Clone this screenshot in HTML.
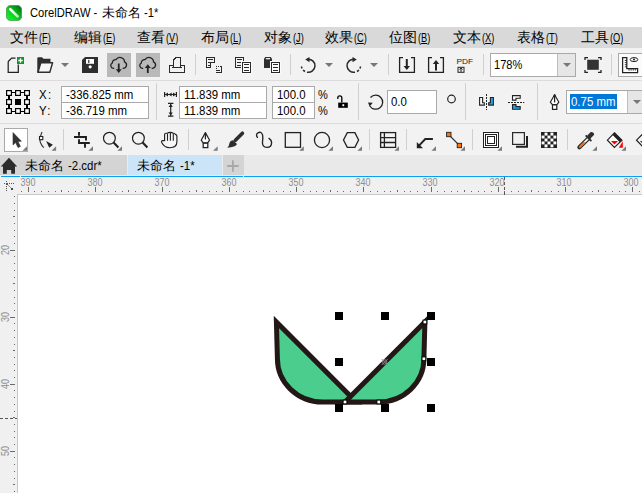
<!DOCTYPE html>
<html><head><meta charset="utf-8">
<style>
*{margin:0;padding:0;box-sizing:border-box}
html,body{width:642px;height:493px;overflow:hidden;background:#fff;font-family:"Liberation Sans",sans-serif;color:#000}
svg.ov{position:absolute;left:0;top:0}
.t{position:absolute;white-space:nowrap;font-size:13px;line-height:16px;color:#000;transform-origin:0 0}
.menu{position:absolute;top:28px;font-size:14px;line-height:18px;white-space:nowrap}
.menu span{display:inline-block;font-size:12.5px;transform:scaleX(0.74);transform-origin:0 0;margin-left:0.5px}
.rl{position:absolute;font-size:10px;line-height:10px;color:#8e8e8e;white-space:nowrap;transform-origin:0 0}
</style></head><body>
<svg class="ov" width="642" height="493" viewBox="0 0 642 493" shape-rendering="crispEdges">
<!-- bands -->
<rect x="0" y="0" width="642" height="27" fill="#fff"/>
<rect x="0" y="27" width="642" height="22" fill="#d9d9d9"/>
<rect x="0" y="48" width="642" height="107" fill="#f2f2f2"/>
<rect x="0" y="80" width="642" height="1" fill="#dcdcdc"/>
<rect x="0" y="123" width="642" height="1" fill="#dcdcdc"/>
<!-- tabs -->
<rect x="0" y="155" width="642" height="21" fill="#e9e9e9"/>
<rect x="0" y="155" width="128" height="21" fill="#d4d4d4"/>

<rect x="128" y="155" width="95" height="21" fill="#cce4f7"/>
<rect x="223" y="155" width="21" height="21" fill="#d4d4d4"/>
<rect x="0" y="175" width="642" height="1" fill="#ebebeb"/><rect x="127" y="155" width="1" height="20" fill="#ececec"/><rect x="222" y="155" width="1" height="20" fill="#ececec"/><rect x="1" y="176" width="641" height="1" fill="#0a9ff0"/><rect x="20" y="175" width="1" height="2" fill="#f0f0f0"/><rect x="243" y="175" width="1" height="2" fill="#f0f0f0"/><rect x="0" y="177" width="642" height="1" fill="#f7f7f7"/>
<!-- rulers -->
<rect x="0" y="177" width="642" height="18" fill="#f0f0f0"/>
<rect x="0" y="177" width="17" height="316" fill="#f0f0f0"/>
<rect x="17" y="194" width="625" height="1" fill="#c8c8c8"/>
<rect x="17" y="194" width="1" height="299" fill="#c8c8c8"/>
<rect x="18" y="195" width="624" height="298" fill="#fff"/>
<!-- toolbar1 separators -->
<g fill="#d0d0d0">
<rect x="195" y="54" width="1" height="21"/>
<rect x="290" y="54" width="1" height="21"/>
<rect x="388" y="54" width="1" height="21"/>
<rect x="483" y="54" width="1" height="21"/>
<rect x="611" y="54" width="1" height="21"/>
<!-- toolbar2 -->
<rect x="156" y="83" width="1" height="37"/>
<rect x="358" y="83" width="1" height="37"/>
<rect x="465" y="83" width="1" height="37"/>
<rect x="537" y="83" width="1" height="37"/>
<!-- toolbar3 -->
<rect x="63" y="129" width="1" height="21"/>
<rect x="188" y="129" width="1" height="21"/>
<rect x="369" y="129" width="1" height="21"/>
<rect x="406" y="129" width="1" height="21"/>
<rect x="472" y="129" width="1" height="21"/>
<rect x="567" y="129" width="1" height="21"/>
</g>
<!-- toolbar1 buttons -->
<rect x="107" y="53" width="24" height="24" fill="#b9b9b9"/>
<rect x="136" y="53" width="24" height="24" fill="#b9b9b9"/>
<!-- zoom combo -->
<rect x="490.5" y="53.5" width="85" height="23" fill="#fff" stroke="#a9a9a9"/>
<rect x="557" y="54" width="18" height="22" fill="#e6e6e6"/>
<rect x="557" y="54" width="1" height="22" fill="#bdbdbd"/>
<rect x="618.5" y="53.5" width="30" height="23" fill="#fbfbfb" stroke="#a9a9a9"/>
<!-- toolbar2 boxes -->
<g fill="#fff" stroke="#a9a9a9">
<rect x="61.5" y="86.5" width="87" height="32"/>
<rect x="179.5" y="86.5" width="87" height="32"/>
<rect x="272.5" y="86.5" width="42" height="32"/>
<rect x="387.5" y="90.5" width="49" height="23"/>
<rect x="566.5" y="90.5" width="80" height="23"/>
</g>
<g fill="#a9a9a9">
<rect x="62" y="102" width="86" height="1"/>
<rect x="180" y="102" width="86" height="1"/>
<rect x="273" y="102" width="41" height="1"/>
</g>
<rect x="627" y="91" width="15" height="22" fill="#e6e6e6"/>
<rect x="627" y="91" width="1" height="22" fill="#bdbdbd"/>
<rect x="570" y="94" width="47" height="15" fill="#0078d7"/>
<!-- select tool button -->
<rect x="4.5" y="128.5" width="23" height="23" fill="#fff" stroke="#a9a9a9"/>
</svg>


<svg class="ov" width="642" height="493" viewBox="0 0 642 493">
<g fill="none" stroke="#222" stroke-width="1.25" stroke-linejoin="miter">
<!-- new doc -->
<path d="M8.2,61.5 L11.7,58 L15.5,58 M8.2,61.5 L8.2,72.3 L18.3,72.3 L18.3,64.5"/>
</g>
<rect x="17" y="57" width="7" height="7" fill="#0a9a2a"/>
<path d="M20.5,58.3 V62.7 M18.3,60.5 H22.7" stroke="#fff" stroke-width="1.3"/>
<!-- open folder -->
<path d="M37.3,72.8 L37.3,58.2 Q37.3,57.3 38.3,57.3 L42,57.3 L43.5,58.8 L50.5,58.8 L50.5,62.5 L41,62.5 L38.5,72.8 Z" fill="#2e2e2e"/>
<path d="M40.8,62.8 L52.6,62.8 L49.8,72.3 L38,72.3 Z" fill="#f6f6f6" stroke="#2e2e2e" stroke-width="1.4" stroke-linejoin="round"/>
<path d="M61,63 H69 L65,67 Z" fill="#777"/>
<!-- save -->
<path d="M82,60 L85,57 L98,57 L98,73 L82,73 Z" fill="#2e2e2e"/>
<rect x="86" y="59" width="8" height="4.8" fill="#fff"/>
<rect x="88.2" y="59.8" width="1.2" height="3.2" fill="#2e2e2e"/>
<circle cx="90.2" cy="66.8" r="1.6" fill="#fff"/>
<!-- cloud down -->
<g fill="none" stroke="#222" stroke-width="1.3">
<path d="M114.2,68.3 L113.5,68.3 A2.8,2.8 0 0 1 112.3,63 A3.2,3.2 0 0 1 116,59.6 A4.6,4.6 0 0 1 124.5,61.8 A3.4,3.4 0 0 1 123.5,68.3 L122.6,68.3"/>
<path d="M143.2,68.3 L142.5,68.3 A2.8,2.8 0 0 1 141.3,63 A3.2,3.2 0 0 1 145,59.6 A4.6,4.6 0 0 1 153.5,61.8 A3.4,3.4 0 0 1 152.5,68.3 L151.6,68.3"/>
</g>
<path d="M118.75,63.5 V70" stroke="#222" stroke-width="1.8"/>
<path d="M115.8,69.2 H121.7 L118.75,73 Z" fill="#222"/>
<path d="M147.8,68 V73" stroke="#222" stroke-width="1.8"/>
<path d="M144.8,68 H150.8 L147.8,64.2 Z" fill="#222"/>
<!-- print -->
<g shape-rendering="crispEdges">
<rect x="173" y="59" width="1" height="9" fill="#2a2a2a"/>
<rect x="180" y="57" width="1" height="11" fill="#2a2a2a"/>
<rect x="175" y="57" width="6" height="1" fill="#2a2a2a"/>
<rect x="174" y="58" width="1" height="2" fill="#2a2a2a"/>
<rect x="175" y="58" width="1" height="1" fill="#2a2a2a"/>
<rect x="169" y="65" width="5" height="1" fill="#2a2a2a"/>
<rect x="180" y="65" width="5" height="1" fill="#2a2a2a"/>
<rect x="169" y="65" width="1" height="8" fill="#2a2a2a"/>
<rect x="184" y="65" width="1" height="8" fill="#2a2a2a"/>
<rect x="169" y="72" width="16" height="1" fill="#2a2a2a"/>
<rect x="172" y="67" width="10" height="1" fill="#2a2a2a"/>
</g>
<!-- cut/clip -->
<g shape-rendering="crispEdges">
<rect x="206" y="57" width="9" height="1" fill="#2a2a2a"/>
<rect x="206" y="57" width="1" height="11" fill="#2a2a2a"/>
<rect x="214" y="57" width="1" height="6" fill="#2a2a2a"/>
<rect x="210" y="62" width="5" height="1" fill="#2a2a2a"/>
<rect x="210" y="62" width="1" height="6" fill="#2a2a2a"/>
<rect x="206" y="67" width="5" height="1" fill="#2a2a2a"/>
<rect x="208" y="59" width="5" height="1" fill="#2a2a2a"/>
<rect x="208" y="62" width="2" height="1" fill="#2a2a2a"/>
<rect x="208" y="65" width="2" height="1" fill="#2a2a2a"/>
<rect x="216" y="66" width="1" height="1" fill="#2a2a2a"/>
<rect x="218" y="66" width="1" height="1" fill="#2a2a2a"/>
<rect x="216" y="68" width="1" height="1" fill="#2a2a2a"/>
<rect x="216" y="70" width="4" height="1" fill="#2a2a2a"/>
<rect x="216" y="72" width="6" height="1" fill="#2a2a2a"/>
<rect x="221" y="66" width="1" height="7" fill="#2a2a2a"/>
<rect x="220" y="66" width="1" height="1" fill="#2a2a2a"/>
<rect x="235" y="57" width="9" height="1" fill="#2a2a2a"/>
<rect x="235" y="57" width="1" height="11" fill="#2a2a2a"/>
<rect x="243" y="57" width="1" height="5" fill="#2a2a2a"/>
<rect x="235" y="67" width="7" height="1" fill="#2a2a2a"/>
<rect x="237" y="59" width="5" height="1" fill="#2a2a2a"/>
<rect x="237" y="62" width="5" height="1" fill="#2a2a2a"/>
<rect x="237" y="65" width="5" height="1" fill="#2a2a2a"/>
<rect x="241" y="61" width="11" height="13" fill="#fbfbfb"/>
<rect x="242" y="62" width="9" height="1" fill="#2a2a2a"/>
<rect x="242" y="72" width="9" height="1" fill="#2a2a2a"/>
<rect x="242" y="62" width="1" height="11" fill="#2a2a2a"/>
<rect x="250" y="62" width="1" height="11" fill="#2a2a2a"/>
<rect x="244" y="64" width="5" height="1" fill="#2a2a2a"/>
<rect x="244" y="67" width="5" height="1" fill="#2a2a2a"/>
<rect x="244" y="70" width="5" height="1" fill="#2a2a2a"/>
</g>
<path d="M264,59 L265.2,57 H270.8 L272,59 V68 H264 Z" fill="#2e2e2e"/>
<rect x="265.9" y="58.1" width="4.2" height="1.2" fill="#fff"/>
<g shape-rendering="crispEdges">
<rect x="270" y="61" width="11" height="13" fill="#fbfbfb"/>
<rect x="271" y="62" width="9" height="1" fill="#2a2a2a"/>
<rect x="271" y="72" width="9" height="1" fill="#2a2a2a"/>
<rect x="271" y="62" width="1" height="11" fill="#2a2a2a"/>
<rect x="279" y="62" width="1" height="11" fill="#2a2a2a"/>
<rect x="273" y="64" width="5" height="1" fill="#2a2a2a"/>
<rect x="273" y="67" width="5" height="1" fill="#2a2a2a"/>
<rect x="273" y="70" width="5" height="1" fill="#2a2a2a"/>
</g>
<!-- undo / redo -->
<g fill="none" stroke="#2a2a2a" stroke-width="1.5">
<path d="M307.5,59.2 A6.6,6.6 0 1 1 307,72.2" />
<path d="M305,71.5 L303,70.2 M302,68.5 L301.4,66.6" />
<path d="M354.5,59.2 A6.6,6.6 0 1 0 355,72.2" />
<path d="M357,71.5 L359,70.2 M360,68.5 L360.6,66.6" />
</g>
<path d="M309.5,57 L309.5,62.2 L305.2,59.6 Z" fill="#2a2a2a"/>
<path d="M352.5,57 L352.5,62.2 L356.8,59.6 Z" fill="#2a2a2a"/>
<path d="M325,63 H333 L329,67 Z" fill="#777"/>
<path d="M370,63 H378 L374,67 Z" fill="#777"/>
<!-- import/export -->
<g fill="none" stroke="#222" stroke-width="1.3">
<path d="M403,57.6 H399.6 V72.3 H414.4 V57.6 H411"/>
<path d="M432,57.6 H428.6 V72.3 H443.4 V57.6 H440"/>
</g>
<path d="M406.8,59 V67" stroke="#222" stroke-width="2"/>
<path d="M403.6,66 H410 L406.8,70 Z" fill="#222"/>
<path d="M436,63 V70.5" stroke="#222" stroke-width="2"/>
<path d="M432.8,64 H439.2 L436,60 Z" fill="#222"/>
<!-- PDF -->
<text x="456.6" y="63.9" font-family="Liberation Sans" font-size="7.6" fill="#222" textLength="16.5" lengthAdjust="spacingAndGlyphs">PDF</text>
<g fill="none" stroke="#222" stroke-width="1"><rect x="458" y="67.3" width="6" height="5"/><path d="M459.5,69.5 L461,68 L462.5,69.5 M461,68 V72"/></g>
<!-- zoom combo arrow -->
<path d="M563,63 H571 L567,67 Z" fill="#777"/>
<!-- zoom fit -->
<g fill="none" stroke="#222" stroke-width="1.3">
<path d="M585,60 V57.6 H588 M598,57.6 H601 V60 M585,70 V72.4 H588 M598,72.4 H601 V70"/>
</g>
<rect x="587.2" y="59.7" width="11.6" height="10.1" fill="#333"/>
<!-- ruler button -->
<path d="M622.6,57.6 H626.8 V68.6 H637.6 V72.6 H622.6 Z" fill="#fff" stroke="#222" stroke-width="1.25"/>
<g stroke="#222" stroke-width="0.9"><path d="M626.8,60.5 H624.8 M626.8,62.6 H624.8 M626.8,64.7 H624.8 M626.8,66.8 H624.8 M629,68.6 V70.6 M631.1,68.6 V70.6 M633.2,68.6 V70.6 M635.3,68.6 V70.6"/></g>
<ellipse cx="634" cy="59.6" rx="3.8" ry="2" fill="none" stroke="#222" stroke-width="1"/>
<circle cx="634" cy="59.6" r="1" fill="#222"/>

<!-- ref point icon -->
<g fill="#000" shape-rendering="crispEdges">
<rect x="12" y="92" width="3" height="1.2"/><rect x="21" y="92" width="3" height="1.2"/>
<rect x="12" y="110.8" width="3" height="1.2"/><rect x="21" y="110.8" width="3" height="1.2"/>
<rect x="8.4" y="96" width="1.2" height="3"/><rect x="8.4" y="105" width="1.2" height="3"/>
<rect x="26.4" y="96" width="1.2" height="3"/><rect x="26.4" y="105" width="1.2" height="3"/>
</g>
<rect x="6" y="90" width="6" height="6" fill="#000"/><rect x="7.2" y="91.2" width="3.6" height="3.6" fill="#fff"/><rect x="6" y="99" width="6" height="6" fill="#000"/><rect x="7.2" y="100.2" width="3.6" height="3.6" fill="#fff"/><rect x="6" y="108" width="6" height="6" fill="#000"/><rect x="7.2" y="109.2" width="3.6" height="3.6" fill="#fff"/><rect x="15" y="90" width="6" height="6" fill="#000"/><rect x="16.2" y="91.2" width="3.6" height="3.6" fill="#fff"/><rect x="15" y="108" width="6" height="6" fill="#000"/><rect x="16.2" y="109.2" width="3.6" height="3.6" fill="#fff"/><rect x="24" y="90" width="6" height="6" fill="#000"/><rect x="25.2" y="91.2" width="3.6" height="3.6" fill="#fff"/><rect x="24" y="99" width="6" height="6" fill="#000"/><rect x="25.2" y="100.2" width="3.6" height="3.6" fill="#fff"/><rect x="24" y="108" width="6" height="6" fill="#000"/><rect x="25.2" y="109.2" width="3.6" height="3.6" fill="#fff"/>
<rect x="15" y="99" width="6" height="6" fill="#000"/>
<!-- width/height icons -->
<g stroke="#222" stroke-width="1.2" fill="none">
<path d="M164.6,92 V97 M176.4,92 V97 M165,94.5 H176"/>
<path d="M168,103.4 H173.4 M168,116.2 H173.4 M170.7,104 V115.6"/>
</g>
<g fill="#222">
<path d="M165,94.5 L168,92.6 V96.4 Z M176,94.5 L173,92.6 V96.4 Z M168.6,94.5 L171.6,92.6 V96.4Z"/>
<path d="M170.7,104 L168.6,107 H172.8 Z M170.7,115.6 L168.6,112.6 H172.8 Z"/>
</g>
<!-- lock -->
<path d="M337.8,99 V97.8 A2,2 0 0 1 341.8,97.8 V102.6" fill="none" stroke="#000" stroke-width="1.3"/>
<rect x="338.2" y="102.6" width="9.6" height="5.2" fill="#000"/>
<rect x="342.4" y="104.2" width="1.8" height="2" fill="#fff"/>
<!-- rotate -->
<path d="M370.5,97.5 A7,7 0 1 1 369.8,106" fill="none" stroke="#222" stroke-width="1.3"/>
<path d="M368,102.6 L372.8,102.8 L369.6,106.6 Z" fill="#222"/>
<circle cx="451.5" cy="99" r="3.8" fill="none" stroke="#222" stroke-width="1.2"/>
<!-- mirror h -->
<path d="M479.6,97.5 H482.6 V102.7 H484.3 V105.1 H479.6 Z" fill="#fff" stroke="#222" stroke-width="1.1"/>
<path d="M493.4,97.5 H490.4 V102.7 H488.7 V105.1 H493.4 Z" fill="#1aa8ef" stroke="#222" stroke-width="1.1"/>
<path d="M486.5,94 V110" stroke="#222" stroke-width="1" stroke-dasharray="2,1"/>
<!-- mirror v -->
<path d="M512.5,95.6 H520.2 V98.2 H516 V100.1 H512.5 Z" fill="#fff" stroke="#222" stroke-width="1.1"/>
<path d="M512.5,109.2 H520.2 V106.6 H516 V104.6 H512.5 Z" fill="#1aa8ef" stroke="#222" stroke-width="1.1"/>
<path d="M508,102.5 H524.3" stroke="#222" stroke-width="1" stroke-dasharray="2,1"/>
<!-- pen (property bar) -->
<path d="M554.6,94.8 L558.9,102.2 L556.8,104.6 H552.4 L550.3,102.2 Z" fill="#fff" stroke="#222" stroke-width="1.15" stroke-linejoin="round"/>
<path d="M554.6,95.2 V102.4" stroke="#222" stroke-width="1.3"/>
<circle cx="554.6" cy="95.2" r="1" fill="#222"/>
<rect x="552.5" y="104.9" width="4.3" height="4.5" fill="#fff" stroke="#222" stroke-width="1.2"/>
<path d="M633,100 H641 L637,104 Z" fill="#777"/>
</svg>


<svg class="ov" width="642" height="493" viewBox="0 0 642 493">
<!-- corner triangles -->
<g fill="#7a7a7a">
<path d="M27,146.2 V150.8 H22.4 Z"/>
<path d="M56.1,146.2 V150.8 H51.5 Z"/>
<path d="M93,146.2 V150.8 H88.4 Z"/>
<path d="M122,146.2 V150.8 H117.4 Z"/>
<path d="M217.7,146.2 V150.8 H213.1 Z"/>
<path d="M303.8,146.2 V150.8 H299.2 Z"/>
<path d="M333,146.2 V150.8 H328.4 Z"/>
<path d="M362,146.2 V150.8 H357.4 Z"/>
<path d="M399,146.2 V150.8 H394.4 Z"/>
<path d="M436,146.2 V150.8 H431.4 Z"/>
<path d="M465,146.2 V150.8 H460.4 Z"/>
<path d="M502,146.2 V150.8 H497.4 Z"/>
<path d="M597,146.2 V150.8 H592.4 Z"/>
<path d="M626,146.2 V150.8 H621.4 Z"/>
</g>
<!-- select arrow -->
<path d="M13,132.6 L13,145 L15.6,142.6 L18,147.6 L20.4,146.4 L18,141.6 L21.4,141.2 Z" fill="#333" stroke="#333" stroke-width="0.6" stroke-linejoin="round"/>
<!-- shape tool -->
<path d="M42,132 Q39,139 40.5,142.8 Q41.6,145.6 43.8,147.6" fill="none" stroke="#333" stroke-width="1.1"/>
<rect x="39.5" y="136.5" width="3.3" height="3.2" fill="#fff" stroke="#222" stroke-width="1.1"/>
<path d="M46.1,140.9 L52.9,144.8 L49.3,147.8 Z" fill="#222"/>
<!-- crop -->
<path d="M79,132 V135.8 M74,137 H86 V140.4 M79,139.2 V143 H89.8 M85,143 V147.8" fill="none" stroke="#1e1e1e" stroke-width="1.9"/>
<!-- zoom -->
<g fill="none" stroke="#222" stroke-width="1.2">
<circle cx="109.4" cy="138.2" r="5.9"/>
<circle cx="138.4" cy="138.2" r="5.9"/>
</g>
<g stroke="#222" stroke-width="2.1" stroke-linecap="butt"><path d="M113.6,142.4 L118.4,147.4 M142.6,142.4 L147.4,147.4"/></g>
<!-- hand -->
<path d="M164.6,140.6 V134.6 Q164.6,133.2 166,133.2 H167.4 Q168,132.3 170.2,132.3 Q172.4,132.3 173,133.2 H173.8 Q175,133.2 175.3,134.4 Q176.9,134.8 176.9,136.3 V141.8 Q176.9,147.7 169.8,147.7 Q164.2,147.7 161.6,142.2 Q161.3,140.6 162.6,140.6 Z" fill="#f7f7f7" stroke="#222" stroke-width="1.15" stroke-linejoin="round"/>
<path d="M167.5,133.6 V140.7 M170.4,133 V140.7 M173.3,133.6 V140.7" stroke="#222" stroke-width="1.1"/>
<!-- pen tool -->
<path d="M205.4,132.6 L209.6,140.2 L207.6,142.8 H203.2 L201.2,140.2 Z" fill="#fff" stroke="#222" stroke-width="1.2" stroke-linejoin="round"/>
<path d="M205.4,133.4 V139.4" stroke="#222" stroke-width="1.3"/>
<rect x="203.2" y="143.2" width="4.6" height="4.4" fill="#fff" stroke="#222" stroke-width="1.25"/>
<!-- brush -->
<path d="M242.4,133.2 L235.4,140.2" stroke="#2e2e2e" stroke-width="3.6" stroke-linecap="round"/>
<path d="M233.2,140.2 L237,144 Q235.8,147.4 227.2,147.7 Q229.2,145.6 229.4,143.4 Q230,140.4 233.2,140.2 Z" fill="#2e2e2e"/>
<!-- curve -->
<path d="M257.4,137.4 Q255.4,134.4 258,132.8 Q261.6,131 262.6,135.2 Q263.2,138.2 262.5,141.6 Q261.9,147.4 267,147.4 Q271.6,147.4 271.6,142.4 Q271.4,140 269,138.4" fill="none" stroke="#222" stroke-width="1.35" stroke-linecap="round"/>
<!-- rect / ellipse / polygon -->
<g fill="none" stroke="#222" stroke-width="1.3">
<rect x="285.3" y="132.6" width="15.2" height="14.7"/>
<circle cx="322" cy="140" r="7.6"/>
<path d="M347.3,132.7 H354.9 L358.6,140 L354.9,147.3 H347.3 L343.5,140 Z"/>
</g>
<!-- table -->
<g fill="none" stroke="#222" stroke-width="1.3">
<rect x="380.6" y="132.6" width="15" height="14.8"/>
<path d="M380.6,137.6 H395.6 M380.6,142.5 H395.6 M384.4,132.6 V147.4"/>
</g>
<!-- connector -->
<path d="M432.9,139 H425.3 L419,145.6" fill="none" stroke="#222" stroke-width="2"/>
<path d="M416.8,142 V148.2 H423 Z" fill="#222"/>
<!-- dimension/ connector nodes -->
<path d="M448.5,134.5 L459.5,145.5" stroke="#333" stroke-width="1.1"/>
<rect x="446.6" y="132.3" width="4.4" height="4.4" fill="#f7740c" stroke="#222" stroke-width="0.9"/>
<rect x="457.2" y="143.3" width="4.4" height="4.4" fill="#f7740c" stroke="#222" stroke-width="0.9"/>
<!-- contour -->
<g fill="none" stroke="#222" stroke-width="1" shape-rendering="crispEdges">
<rect x="483.5" y="132.5" width="15" height="15" fill="#fff"/>
<rect x="485.5" y="134.5" width="11" height="11"/>
<rect x="487.5" y="136.5" width="7" height="7"/>
</g>
<!-- shadow -->
<path d="M527,136 V146.8 H516" fill="none" stroke="#222" stroke-width="2"/>
<rect x="512.6" y="132.6" width="11.8" height="11.8" fill="none" stroke="#2a2a2a" stroke-width="1.2"/>
<!-- transparency checker -->
<rect x="541" y="132" width="16" height="16" fill="#222"/>
<g fill="#fff"><rect x="544.55" y="132.60" width="2.95" height="2.95"/><rect x="550.45" y="132.60" width="2.95" height="2.95"/><rect x="541.60" y="135.55" width="2.95" height="2.95"/><rect x="547.50" y="135.55" width="2.95" height="2.95"/><rect x="553.40" y="135.55" width="2.95" height="2.95"/><rect x="544.55" y="138.50" width="2.95" height="2.95"/><rect x="550.45" y="138.50" width="2.95" height="2.95"/><rect x="541.60" y="141.45" width="2.95" height="2.95"/><rect x="547.50" y="141.45" width="2.95" height="2.95"/><rect x="553.40" y="141.45" width="2.95" height="2.95"/><rect x="544.55" y="144.40" width="2.95" height="2.95"/><rect x="550.45" y="144.40" width="2.95" height="2.95"/></g>
<!-- eyedropper -->
<path d="M588.6,138.2 L579.4,147.2" stroke="#2e2e2e" stroke-width="4.2" stroke-linecap="round"/>
<path d="M588.2,138.6 L580,146.8" stroke="#fff" stroke-width="1.6"/>
<path d="M584,142.8 L579.8,147" stroke="#f06a10" stroke-width="1.8" stroke-linecap="round"/>
<path d="M585.6,135.4 L591.4,141.2" stroke="#2e2e2e" stroke-width="1.8"/>
<path d="M587.2,135.6 L590.8,132 Q593.8,131.6 594.2,134.8 L590.4,138.6 Z" fill="#2e2e2e"/>
<!-- fill bucket -->
<path d="M614.4,132.8 L621.9,140.2 L614.4,147.4 L607.4,140.2 Z" fill="#fff" stroke="#222" stroke-width="1.2"/>
<path d="M613.6,134 L621.1,141.4" stroke="#222" stroke-width="3"/>
<path d="M610.9,141.1 H618.1 L614.5,144.4 Z" fill="#f00"/>
<path d="M622.8,141.2 V147.7 H618.8 Z" fill="#f00"/>
<!-- partial next -->
<path d="M643.5,133 L636.5,140.2 L643.5,147.4" fill="none" stroke="#222" stroke-width="1.2"/>
<path d="M639.8,141.1 H642 V143.2 Z" fill="#f00"/>

<!-- home -->
<path d="M9,157.8 L17.2,166.6 H15 V173.8 H11.2 V170 H6.8 V173.8 H3 V166.6 H0.8 Z" fill="#2b2b2b"/>
<!-- plus -->
<path d="M232.9,160.2 V171.8 M227.1,166 H238.7" stroke="#a8a8a8" stroke-width="1.8"/>
</svg>

<svg class="ov" width="642" height="493" viewBox="0 0 642 493">
<g shape-rendering="crispEdges"><rect x="21" y="191" width="1" height="1" fill="#6a6a6a"/><rect x="28" y="187" width="1" height="5" fill="#6a6a6a"/><rect x="34" y="191" width="1" height="1" fill="#6a6a6a"/><rect x="41" y="191" width="1" height="1" fill="#6a6a6a"/><rect x="48" y="191" width="1" height="1" fill="#6a6a6a"/><rect x="55" y="191" width="1" height="1" fill="#6a6a6a"/><rect x="61" y="190" width="1" height="2" fill="#6a6a6a"/><rect x="68" y="191" width="1" height="1" fill="#6a6a6a"/><rect x="75" y="191" width="1" height="1" fill="#6a6a6a"/><rect x="81" y="191" width="1" height="1" fill="#6a6a6a"/><rect x="88" y="191" width="1" height="1" fill="#6a6a6a"/><rect x="95" y="187" width="1" height="5" fill="#6a6a6a"/><rect x="102" y="191" width="1" height="1" fill="#6a6a6a"/><rect x="108" y="191" width="1" height="1" fill="#6a6a6a"/><rect x="115" y="191" width="1" height="1" fill="#6a6a6a"/><rect x="122" y="191" width="1" height="1" fill="#6a6a6a"/><rect x="128" y="190" width="1" height="2" fill="#6a6a6a"/><rect x="135" y="191" width="1" height="1" fill="#6a6a6a"/><rect x="142" y="191" width="1" height="1" fill="#6a6a6a"/><rect x="149" y="191" width="1" height="1" fill="#6a6a6a"/><rect x="155" y="191" width="1" height="1" fill="#6a6a6a"/><rect x="162" y="187" width="1" height="5" fill="#6a6a6a"/><rect x="169" y="191" width="1" height="1" fill="#6a6a6a"/><rect x="175" y="191" width="1" height="1" fill="#6a6a6a"/><rect x="182" y="191" width="1" height="1" fill="#6a6a6a"/><rect x="189" y="191" width="1" height="1" fill="#6a6a6a"/><rect x="196" y="190" width="1" height="2" fill="#6a6a6a"/><rect x="202" y="191" width="1" height="1" fill="#6a6a6a"/><rect x="209" y="191" width="1" height="1" fill="#6a6a6a"/><rect x="216" y="191" width="1" height="1" fill="#6a6a6a"/><rect x="222" y="191" width="1" height="1" fill="#6a6a6a"/><rect x="229" y="187" width="1" height="5" fill="#6a6a6a"/><rect x="236" y="191" width="1" height="1" fill="#6a6a6a"/><rect x="243" y="191" width="1" height="1" fill="#6a6a6a"/><rect x="249" y="191" width="1" height="1" fill="#6a6a6a"/><rect x="256" y="191" width="1" height="1" fill="#6a6a6a"/><rect x="263" y="190" width="1" height="2" fill="#6a6a6a"/><rect x="269" y="191" width="1" height="1" fill="#6a6a6a"/><rect x="276" y="191" width="1" height="1" fill="#6a6a6a"/><rect x="283" y="191" width="1" height="1" fill="#6a6a6a"/><rect x="290" y="191" width="1" height="1" fill="#6a6a6a"/><rect x="296" y="187" width="1" height="5" fill="#6a6a6a"/><rect x="303" y="191" width="1" height="1" fill="#6a6a6a"/><rect x="310" y="191" width="1" height="1" fill="#6a6a6a"/><rect x="316" y="191" width="1" height="1" fill="#6a6a6a"/><rect x="323" y="191" width="1" height="1" fill="#6a6a6a"/><rect x="330" y="190" width="1" height="2" fill="#6a6a6a"/><rect x="337" y="191" width="1" height="1" fill="#6a6a6a"/><rect x="343" y="191" width="1" height="1" fill="#6a6a6a"/><rect x="350" y="191" width="1" height="1" fill="#6a6a6a"/><rect x="357" y="191" width="1" height="1" fill="#6a6a6a"/><rect x="363" y="187" width="1" height="5" fill="#6a6a6a"/><rect x="370" y="191" width="1" height="1" fill="#6a6a6a"/><rect x="377" y="191" width="1" height="1" fill="#6a6a6a"/><rect x="384" y="191" width="1" height="1" fill="#6a6a6a"/><rect x="390" y="191" width="1" height="1" fill="#6a6a6a"/><rect x="397" y="190" width="1" height="2" fill="#6a6a6a"/><rect x="404" y="191" width="1" height="1" fill="#6a6a6a"/><rect x="410" y="191" width="1" height="1" fill="#6a6a6a"/><rect x="417" y="191" width="1" height="1" fill="#6a6a6a"/><rect x="424" y="191" width="1" height="1" fill="#6a6a6a"/><rect x="431" y="187" width="1" height="5" fill="#6a6a6a"/><rect x="437" y="191" width="1" height="1" fill="#6a6a6a"/><rect x="444" y="191" width="1" height="1" fill="#6a6a6a"/><rect x="451" y="191" width="1" height="1" fill="#6a6a6a"/><rect x="457" y="191" width="1" height="1" fill="#6a6a6a"/><rect x="464" y="190" width="1" height="2" fill="#6a6a6a"/><rect x="471" y="191" width="1" height="1" fill="#6a6a6a"/><rect x="478" y="191" width="1" height="1" fill="#6a6a6a"/><rect x="484" y="191" width="1" height="1" fill="#6a6a6a"/><rect x="491" y="191" width="1" height="1" fill="#6a6a6a"/><rect x="498" y="187" width="1" height="5" fill="#6a6a6a"/><rect x="504" y="191" width="1" height="1" fill="#6a6a6a"/><rect x="511" y="191" width="1" height="1" fill="#6a6a6a"/><rect x="518" y="191" width="1" height="1" fill="#6a6a6a"/><rect x="525" y="191" width="1" height="1" fill="#6a6a6a"/><rect x="531" y="190" width="1" height="2" fill="#6a6a6a"/><rect x="538" y="191" width="1" height="1" fill="#6a6a6a"/><rect x="545" y="191" width="1" height="1" fill="#6a6a6a"/><rect x="551" y="191" width="1" height="1" fill="#6a6a6a"/><rect x="558" y="191" width="1" height="1" fill="#6a6a6a"/><rect x="565" y="187" width="1" height="5" fill="#6a6a6a"/><rect x="572" y="191" width="1" height="1" fill="#6a6a6a"/><rect x="578" y="191" width="1" height="1" fill="#6a6a6a"/><rect x="585" y="191" width="1" height="1" fill="#6a6a6a"/><rect x="592" y="191" width="1" height="1" fill="#6a6a6a"/><rect x="598" y="190" width="1" height="2" fill="#6a6a6a"/><rect x="605" y="191" width="1" height="1" fill="#6a6a6a"/><rect x="612" y="191" width="1" height="1" fill="#6a6a6a"/><rect x="619" y="191" width="1" height="1" fill="#6a6a6a"/><rect x="625" y="191" width="1" height="1" fill="#6a6a6a"/><rect x="632" y="187" width="1" height="5" fill="#6a6a6a"/><rect x="639" y="191" width="1" height="1" fill="#6a6a6a"/><rect x="14" y="196" width="1" height="1" fill="#6a6a6a"/><rect x="14" y="203" width="1" height="1" fill="#6a6a6a"/><rect x="14" y="210" width="1" height="1" fill="#6a6a6a"/><rect x="13" y="216" width="2" height="1" fill="#6a6a6a"/><rect x="14" y="223" width="1" height="1" fill="#6a6a6a"/><rect x="14" y="230" width="1" height="1" fill="#6a6a6a"/><rect x="14" y="236" width="1" height="1" fill="#6a6a6a"/><rect x="14" y="243" width="1" height="1" fill="#6a6a6a"/><rect x="10" y="250" width="5" height="1" fill="#6a6a6a"/><rect x="14" y="256" width="1" height="1" fill="#6a6a6a"/><rect x="14" y="263" width="1" height="1" fill="#6a6a6a"/><rect x="14" y="270" width="1" height="1" fill="#6a6a6a"/><rect x="14" y="277" width="1" height="1" fill="#6a6a6a"/><rect x="13" y="283" width="2" height="1" fill="#6a6a6a"/><rect x="14" y="290" width="1" height="1" fill="#6a6a6a"/><rect x="14" y="297" width="1" height="1" fill="#6a6a6a"/><rect x="14" y="303" width="1" height="1" fill="#6a6a6a"/><rect x="14" y="310" width="1" height="1" fill="#6a6a6a"/><rect x="10" y="317" width="5" height="1" fill="#6a6a6a"/><rect x="14" y="323" width="1" height="1" fill="#6a6a6a"/><rect x="14" y="330" width="1" height="1" fill="#6a6a6a"/><rect x="14" y="337" width="1" height="1" fill="#6a6a6a"/><rect x="14" y="344" width="1" height="1" fill="#6a6a6a"/><rect x="13" y="350" width="2" height="1" fill="#6a6a6a"/><rect x="14" y="357" width="1" height="1" fill="#6a6a6a"/><rect x="14" y="364" width="1" height="1" fill="#6a6a6a"/><rect x="14" y="370" width="1" height="1" fill="#6a6a6a"/><rect x="14" y="377" width="1" height="1" fill="#6a6a6a"/><rect x="10" y="384" width="5" height="1" fill="#6a6a6a"/><rect x="14" y="390" width="1" height="1" fill="#6a6a6a"/><rect x="14" y="397" width="1" height="1" fill="#6a6a6a"/><rect x="14" y="404" width="1" height="1" fill="#6a6a6a"/><rect x="14" y="411" width="1" height="1" fill="#6a6a6a"/><rect x="13" y="417" width="2" height="1" fill="#6a6a6a"/><rect x="14" y="424" width="1" height="1" fill="#6a6a6a"/><rect x="14" y="431" width="1" height="1" fill="#6a6a6a"/><rect x="14" y="437" width="1" height="1" fill="#6a6a6a"/><rect x="14" y="444" width="1" height="1" fill="#6a6a6a"/><rect x="10" y="451" width="5" height="1" fill="#6a6a6a"/><rect x="14" y="457" width="1" height="1" fill="#6a6a6a"/><rect x="14" y="464" width="1" height="1" fill="#6a6a6a"/><rect x="14" y="471" width="1" height="1" fill="#6a6a6a"/><rect x="14" y="478" width="1" height="1" fill="#6a6a6a"/><rect x="13" y="484" width="2" height="1" fill="#6a6a6a"/><rect x="14" y="491" width="1" height="1" fill="#6a6a6a"/></g>
<path d="M504.5,177 V195" stroke="#555" stroke-width="1" stroke-dasharray="3,2"/>
<path d="M0,418.5 H17" stroke="#555" stroke-width="1" stroke-dasharray="3,2"/>
<g fill="#555" shape-rendering="crispEdges"><rect x="4" y="183" width="1" height="1"/><rect x="6" y="181" width="1" height="1"/><rect x="6" y="183" width="1.5" height="1.5"/><rect x="9" y="183" width="1" height="1"/><rect x="11" y="183" width="1" height="1"/><rect x="13" y="183" width="1" height="1"/><rect x="6" y="186" width="1" height="1"/><rect x="6" y="188" width="1" height="1"/><rect x="6" y="190" width="1" height="1"/></g><path d="M7.5,184.5 L11,188" stroke="#555" stroke-width="1" stroke-dasharray="1,0.5"/><rect x="11" y="188" width="2" height="2" fill="#444"/></svg>

<svg class="ov" width="642" height="493" viewBox="0 0 642 493">
<g fill="#4bcd8e" stroke="#231815" stroke-width="5" stroke-linejoin="miter" stroke-miterlimit="10">
<path d="M276.4,322 L277.4,358.8 A45.1,43.2 0 0 0 322.5,402 L356.3,402 Z"/>
<path d="M424.9,322 L423.9,358.8 A45.1,43.2 0 0 1 378.8,402 L345,402 Z"/>
</g>
<g fill="#fff" stroke="#000" stroke-width="1">
<rect x="423" y="320.1" width="3.8" height="3.8"/>
<rect x="422" y="356.9" width="3.8" height="3.8"/>
<rect x="376.9" y="400.1" width="3.8" height="3.8"/>
<rect x="343.1" y="400.1" width="3.8" height="3.8"/>
</g>
<g fill="#000" shape-rendering="crispEdges">
<rect x="335" y="312" width="8" height="8"/><rect x="381" y="312" width="8" height="8"/><rect x="427" y="312" width="8" height="8"/>
<rect x="335" y="358" width="8" height="8"/><rect x="427" y="358" width="8" height="8"/>
<rect x="335" y="404" width="8" height="8"/><rect x="381" y="404" width="8" height="8"/><rect x="427" y="404" width="8" height="8"/>
</g>
<g stroke="#8a8a8a" stroke-width="0.9" fill="none">
<circle cx="384.7" cy="362" r="2.2"/>
<path d="M381.7,359 L387.7,365 M387.7,359 L381.7,365"/>
</g>
</svg>

<div class="rl" style="left:18.0px;top:178px;width:20px;text-align:center;transform:scaleX(0.9);transform-origin:50% 0">390</div>
<div class="rl" style="left:85.0px;top:178px;width:20px;text-align:center;transform:scaleX(0.9);transform-origin:50% 0">380</div>
<div class="rl" style="left:152.1px;top:178px;width:20px;text-align:center;transform:scaleX(0.9);transform-origin:50% 0">370</div>
<div class="rl" style="left:219.1px;top:178px;width:20px;text-align:center;transform:scaleX(0.9);transform-origin:50% 0">360</div>
<div class="rl" style="left:286.2px;top:178px;width:20px;text-align:center;transform:scaleX(0.9);transform-origin:50% 0">350</div>
<div class="rl" style="left:353.2px;top:178px;width:20px;text-align:center;transform:scaleX(0.9);transform-origin:50% 0">340</div>
<div class="rl" style="left:420.2px;top:178px;width:20px;text-align:center;transform:scaleX(0.9);transform-origin:50% 0">330</div>
<div class="rl" style="left:487.3px;top:178px;width:20px;text-align:center;transform:scaleX(0.9);transform-origin:50% 0">320</div>
<div class="rl" style="left:554.3px;top:178px;width:20px;text-align:center;transform:scaleX(0.9);transform-origin:50% 0">310</div>
<div class="rl" style="left:621.4px;top:178px;width:20px;text-align:center;transform:scaleX(0.9);transform-origin:50% 0">300</div>
<div class="rl" style="left:-4.5px;top:244.7px;width:20px;height:10px;text-align:center;transform:rotate(-90deg) scaleX(0.9);transform-origin:50% 50%">20</div>
<div class="rl" style="left:-4.5px;top:311.7px;width:20px;height:10px;text-align:center;transform:rotate(-90deg) scaleX(0.9);transform-origin:50% 50%">30</div>
<div class="rl" style="left:-4.5px;top:378.7px;width:20px;height:10px;text-align:center;transform:rotate(-90deg) scaleX(0.9);transform-origin:50% 50%">40</div>
<div class="rl" style="left:-4.5px;top:445.7px;width:20px;height:10px;text-align:center;transform:rotate(-90deg) scaleX(0.9);transform-origin:50% 50%">50</div>
<!-- title -->
<svg class="ov" style="left:6px;top:5px" width="16" height="16" viewBox="0 0 16 16">
<defs><linearGradient id="lg" x1="0" y1="1" x2="1" y2="0"><stop offset="0" stop-color="#10ff30"/><stop offset="0.45" stop-color="#0ad020"/><stop offset="1" stop-color="#006010"/></linearGradient>
<linearGradient id="lw" x1="0" y1="0" x2="1" y2="1"><stop offset="0" stop-color="#fff"/><stop offset="1" stop-color="#b8f0b8"/></linearGradient></defs>
<rect x="0.4" y="0.4" width="15.2" height="15.2" rx="4.2" fill="url(#lg)" stroke="#3c8c3c" stroke-width="0.7"/>
<path d="M4.3,4.2 L11.6,11.4" stroke="url(#lw)" stroke-width="2.6" stroke-linecap="round" gradientUnits="userSpaceOnUse"/>
</svg>
<div class="t" style="left:30px;top:5px;font-size:12.5px"><span style="display:inline-block;transform:scaleX(0.895);transform-origin:0 0;width:70px">CorelDRAW -</span><span style="font-size:13px;margin-left:2px">未命名</span> <span style="display:inline-block;transform:scaleX(0.9);transform-origin:0 0">-1*</span></div>

<!-- menu -->
<div class="menu" style="left:10px">文件<span>(<u>F</u>)</span></div>
<div class="menu" style="left:74px">编辑<span>(<u>E</u>)</span></div>
<div class="menu" style="left:137px">查看<span>(<u>V</u>)</span></div>
<div class="menu" style="left:201px">布局<span>(<u>L</u>)</span></div>
<div class="menu" style="left:264px">对象<span>(<u>J</u>)</span></div>
<div class="menu" style="left:325px">效果<span>(<u>C</u>)</span></div>
<div class="menu" style="left:389px">位图<span>(<u>B</u>)</span></div>
<div class="menu" style="left:453px">文本<span>(<u>X</u>)</span></div>
<div class="menu" style="left:517px">表格<span>(<u>T</u>)</span></div>
<div class="menu" style="left:581px">工具<span>(<u>O</u>)</span></div>

<!-- toolbar texts -->
<div class="t" style="left:494px;top:57px;transform:scaleX(0.85)">178%</div>
<div class="t" style="left:39px;top:87px;transform:scaleX(0.88);letter-spacing:1.5px">X:</div>
<div class="t" style="left:39px;top:103px;transform:scaleX(0.88);letter-spacing:1.5px">Y:</div>
<div class="t" style="left:66px;top:87px;transform:scaleX(0.88)">-336.825 mm</div>
<div class="t" style="left:66px;top:103px;transform:scaleX(0.88)">-36.719 mm</div>
<div class="t" style="left:184px;top:87px;transform:scaleX(0.88)">11.839 mm</div>
<div class="t" style="left:184px;top:103px;transform:scaleX(0.88)">11.839 mm</div>
<div class="t" style="left:277px;top:87px;transform:scaleX(0.88)">100.0</div>
<div class="t" style="left:277px;top:103px;transform:scaleX(0.88)">100.0</div>
<div class="t" style="left:318px;top:87px;transform:scaleX(0.85)">%</div>
<div class="t" style="left:318px;top:103px;transform:scaleX(0.85)">%</div>
<div class="t" style="left:391px;top:94px;transform:scaleX(0.88)">0.0</div>
<div class="t" style="left:571px;top:94px;transform:scaleX(0.88);color:#fff">0.75 mm</div>

<!-- tabs text -->
<div class="t" style="left:25px;top:158px">未命名 <span style="display:inline-block;transform:scaleX(0.88);transform-origin:0 0">-2.cdr*</span></div>
<div class="t" style="left:137px;top:158px">未命名 <span style="display:inline-block;transform:scaleX(0.88);transform-origin:0 0">-1*</span></div>

</body></html>
